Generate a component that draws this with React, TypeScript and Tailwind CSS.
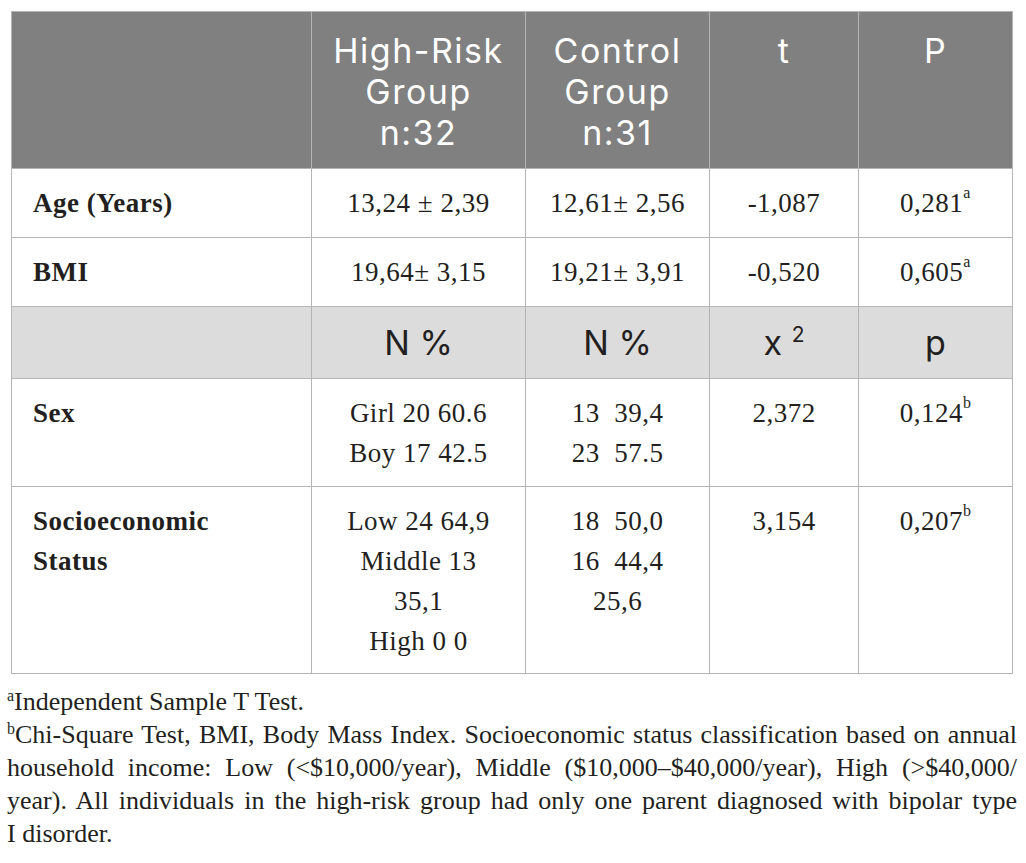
import React from "react";

const serif = "font-['Liberation_Serif',serif]";
const sans = "font-['Inter',sans-serif]";

function Sup({ c }: { c: string }) {
  return <sup className="text-[16px] relative top-[-4px] align-super leading-none">{c}</sup>;
}

const hd = `bg-[#808080] text-white ${sans} text-[34px] leading-[41px] tracking-[1.5px] text-center align-top pt-[18px] pb-[15px] border border-[#b5b5b5] font-normal`;
const sub = `bg-[#dcdcdc] text-[#231f20] ${sans} text-[34px] leading-[41px] text-center align-top py-[15px] border border-[#b5b5b5] font-normal`;
const lab = `${serif} font-bold text-[27px] tracking-[0.5px] leading-[40px] text-left align-top pl-[21px] border border-[#b5b5b5] text-[#231f20]`;
const dat = `${serif} text-[27px] tracking-[0.5px] leading-[40px] text-center align-top border border-[#b5b5b5] text-[#231f20]`;

export default function App() {
  return (
    <div className="bg-white w-[1026px] h-[863px] pt-[11px]">
      <table className="ml-[11px] w-[1001px] border-collapse table-fixed">
        <colgroup>
          <col className="w-[300px]" />
          <col className="w-[214px]" />
          <col className="w-[184px]" />
          <col className="w-[149px]" />
          <col className="w-[154px]" />
        </colgroup>
        <thead>
          <tr>
            <th className={hd}></th>
            <th className={hd}>
              <div>High-Risk</div>
              <div>Group</div>
              <div>n:32</div>
            </th>
            <th className={hd}>
              <div>Control</div>
              <div>Group</div>
              <div>n:31</div>
            </th>
            <th className={hd}>t</th>
            <th className={hd}>P</th>
          </tr>
        </thead>
        <tbody>
          <tr>
            <td className={`${lab} pt-[14px] pb-[14px]`}>Age (Years)</td>
            <td className={`${dat} pt-[14px] pb-[14px]`}>13,24 ± 2,39</td>
            <td className={`${dat} pt-[14px] pb-[14px]`}>12,61± 2,56</td>
            <td className={`${dat} pt-[14px] pb-[14px]`}>-1,087</td>
            <td className={`${dat} pt-[14px] pb-[14px]`}>
              0,281<Sup c="a" />
            </td>
          </tr>
          <tr>
            <td className={`${lab} pt-[14px] pb-[14px]`}>BMI</td>
            <td className={`${dat} pt-[14px] pb-[14px]`}>19,64± 3,15</td>
            <td className={`${dat} pt-[14px] pb-[14px]`}>19,21± 3,91</td>
            <td className={`${dat} pt-[14px] pb-[14px]`}>-0,520</td>
            <td className={`${dat} pt-[14px] pb-[14px]`}>
              0,605<Sup c="a" />
            </td>
          </tr>
          <tr>
            <td className={sub}></td>
            <td className={sub}>N %</td>
            <td className={sub}>N %</td>
            <td className={sub}>
              x <span className="text-[21px] leading-none relative top-[-13px]">2</span>
            </td>
            <td className={sub}>p</td>
          </tr>
          <tr>
            <td className={`${lab} pt-[14px] pb-[13px]`}>Sex</td>
            <td className={`${dat} pt-[14px] pb-[13px]`}>
              <div>Girl 20 60.6</div>
              <div>Boy 17 42.5</div>
            </td>
            <td className={`${dat} pt-[14px] pb-[13px]`}>
              <div>13&nbsp; 39,4</div>
              <div>23&nbsp; 57.5</div>
            </td>
            <td className={`${dat} pt-[14px] pb-[13px]`}>2,372</td>
            <td className={`${dat} pt-[14px] pb-[13px]`}>
              0,124<Sup c="b" />
            </td>
          </tr>
          <tr>
            <td className={`${lab} pt-[14px] pb-[12px]`}>
              <div>Socioeconomic</div>
              <div>Status</div>
            </td>
            <td className={`${dat} pt-[14px] pb-[12px]`}>
              <div>Low 24 64,9</div>
              <div>Middle 13</div>
              <div>35,1</div>
              <div>High 0 0</div>
            </td>
            <td className={`${dat} pt-[14px] pb-[12px]`}>
              <div>18&nbsp; 50,0</div>
              <div>16&nbsp; 44,4</div>
              <div>25,6</div>
            </td>
            <td className={`${dat} pt-[14px] pb-[12px]`}>3,154</td>
            <td className={`${dat} pt-[14px] pb-[12px]`}>
              0,207<Sup c="b" />
            </td>
          </tr>
        </tbody>
      </table>
      <div className={`${serif} text-[26px] leading-[33px] text-[#231f20] mt-[11px] pl-[7px] pr-[9px]`}>
        <div>
          <span className="text-[16px] leading-none relative top-[-9px]">a</span>Independent Sample T Test.
        </div>
        <div className="text-justify [text-align-last:justify]">
          <span className="text-[16px] leading-none relative top-[-9px]">b</span>Chi-Square Test, BMI, Body Mass Index. Socioeconomic status classification based on annual
        </div>
        <div className="text-justify [text-align-last:justify]">
          household income: Low (&lt;$10,000/year), Middle ($10,000–$40,000/year), High (&gt;$40,000/
        </div>
        <div className="text-justify [text-align-last:justify]">
          year). All individuals in the high-risk group had only one parent diagnosed with bipolar type
        </div>
        <div>I disorder.</div>
      </div>
    </div>
  );
}
